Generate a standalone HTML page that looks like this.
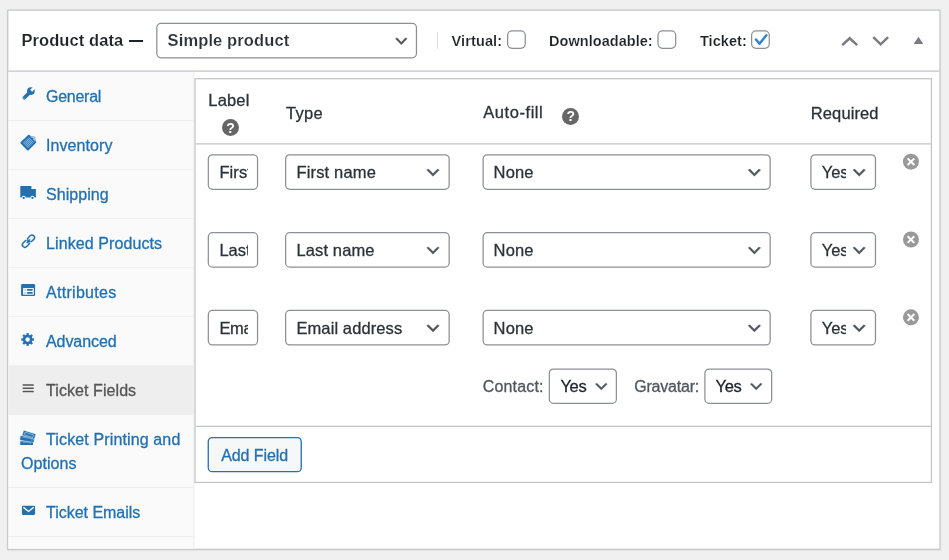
<!DOCTYPE html>
<html><head><meta charset="utf-8">
<style>
*{box-sizing:border-box;margin:0;padding:0}
html,body{width:949px;height:560px;overflow:hidden;background:#f0f0f1;font-family:"Liberation Sans",sans-serif;color:#3c434a}
.a{position:absolute}
.t{position:absolute;white-space:nowrap;line-height:24px;height:24px;will-change:opacity;opacity:.999}
.box{position:absolute;border:1px solid #8c8f94;border-radius:4px;background:#fff}
.clip{position:absolute;overflow:hidden}
svg{overflow:visible}
</style></head><body>

<div class="a" style="left:7px;top:10px;width:934px;height:540px;box-shadow:0 1px 1px rgba(0,0,0,.05)"></div>
<svg class="a" style="left:0;top:0" width="949" height="560" viewBox="0 0 949 560"><rect x="7.75" y="10.1" width="932.25" height="539.2" fill="#fff" stroke="#c3c4c7" stroke-width="1.25"/><rect x="8.37" y="71.6" width="185.2" height="477.1" fill="#fafafa"/><rect x="8.37" y="365" width="184.8" height="50" fill="#eee"/><rect x="8.37" y="120" width="184.8" height="1" fill="#eee"/><rect x="8.37" y="169" width="184.8" height="1" fill="#eee"/><rect x="8.37" y="218" width="184.8" height="1" fill="#eee"/><rect x="8.37" y="267" width="184.8" height="1" fill="#eee"/><rect x="8.37" y="316" width="184.8" height="1" fill="#eee"/><rect x="8.37" y="487" width="184.8" height="1" fill="#eee"/><rect x="8.37" y="536" width="184.8" height="1" fill="#eee"/><path d="M193.8 71.6 V548.7" stroke="#eee" stroke-width="1.25"/><path d="M8.3 71.05 H939.4" stroke="#c3c4c7" stroke-width="1.25"/><rect x="195" y="78.7" width="736.4" height="403.7" fill="#fff" stroke="#c3c4c7" stroke-width="1.25"/><path d="M195.6 143.9 H930.8 M195.6 426.4 H930.8" stroke="#c3c4c7" stroke-width="1.25"/></svg>
<svg class="a" style="left:0;top:0" width="949" height="560"><rect x="156.82" y="23.48" width="259.65" height="34.30" rx="4.2" fill="#fff" stroke="#8c8f94" stroke-width="1.25"/></svg>
<svg class="a" style="left:0;top:0" width="949" height="560"><polygon points="397.10,37.78 401.30,42.18 405.50,37.78 407.18,38.66 401.30,44.82 395.42,38.66" fill="#50575e" stroke="#50575e" stroke-width="0.35" stroke-linejoin="round"/></svg>
<div class="a" style="left:437px;top:32px;width:1px;height:17px;background:#dcdcde"></div>
<svg class="a" style="left:0;top:0" width="949" height="560"><rect x="507.62" y="30.82" width="17.65" height="17.45" rx="4.4" fill="#fff" stroke="#8c8f94" stroke-width="1.25"/></svg>
<svg class="a" style="left:0;top:0" width="949" height="560"><rect x="658.02" y="30.82" width="17.65" height="17.45" rx="4.4" fill="#fff" stroke="#8c8f94" stroke-width="1.25"/></svg>
<svg class="a" style="left:0;top:0" width="949" height="560"><rect x="751.62" y="30.82" width="17.65" height="17.45" rx="4.4" fill="#fff" stroke="#8c8f94" stroke-width="1.25"/></svg>
<svg class="a" style="left:0;top:0" width="949" height="560"><path d="M756 39.5 L759.5 43.7 L766.3 35.3" fill="none" stroke="#3582c4" stroke-width="2.5" stroke-linecap="round" stroke-linejoin="round"/></svg>
<svg class="a" style="left:0;top:0" width="949" height="560"><path d="M842.2 45.1 L849.7 38.3 L857.2 45.1" fill="none" stroke="#787c82" stroke-width="2.5"/><path d="M873.3 37.2 L880.7 44.3 L888.1 37.2" fill="none" stroke="#787c82" stroke-width="2.5"/><path d="M913.7 44 L918.5 36.8 L923.3 44Z" fill="#787c82"/></svg>
<div class="a" style="left:222.0px;top:119.2px;width:17px;height:17px;border-radius:50%;background:#666"></div>
<div class="t" style="left:222.0px;top:115.7px;width:17px;text-align:center;font-size:14px;font-weight:bold;color:#fff">?</div>
<div class="a" style="left:562.3px;top:107.7px;width:17px;height:17px;border-radius:50%;background:#666"></div>
<div class="t" style="left:562.3px;top:104.2px;width:17px;text-align:center;font-size:14px;font-weight:bold;color:#fff">?</div>
<svg class="a" style="left:0;top:0" width="949" height="560"><rect x="208.32" y="154.82" width="49.25" height="34.45" rx="4.2" fill="#fff" stroke="#8c8f94" stroke-width="1.25"/></svg>
<div class="clip" style="left:219px;top:157px;width:29px;height:31px"><div class="t" style="letter-spacing:0.1px;left:0.4px;top:3px;font-size:16.5px;color:#2c3338;-webkit-text-stroke:0.3px #2c3338">First Name</div></div>
<svg class="a" style="left:0;top:0" width="949" height="560"><rect x="285.62" y="154.82" width="163.55" height="34.45" rx="4.2" fill="#fff" stroke="#8c8f94" stroke-width="1.25"/></svg>
<svg class="a" style="left:0;top:0" width="949" height="560"><polygon points="428.50,169.10 433.00,173.60 437.50,169.10 439.30,170.00 433.00,176.30 426.70,170.00" fill="#50575e" stroke="#50575e" stroke-width="0.35" stroke-linejoin="round"/></svg>
<svg class="a" style="left:0;top:0" width="949" height="560"><rect x="483.12" y="154.82" width="287.05" height="34.45" rx="4.2" fill="#fff" stroke="#8c8f94" stroke-width="1.25"/></svg>
<svg class="a" style="left:0;top:0" width="949" height="560"><polygon points="749.90,169.10 754.40,173.60 758.90,169.10 760.70,170.00 754.40,176.30 748.10,170.00" fill="#50575e" stroke="#50575e" stroke-width="0.35" stroke-linejoin="round"/></svg>
<svg class="a" style="left:0;top:0" width="949" height="560"><rect x="810.92" y="154.82" width="64.55" height="34.45" rx="4.2" fill="#fff" stroke="#8c8f94" stroke-width="1.25"/></svg>
<div class="clip" style="left:821px;top:157px;width:25.2px;height:31px"><div class="t" style="left:0.7px;top:3px;font-size:16.5px;color:#2c3338;-webkit-text-stroke:0.3px #2c3338">Yes</div></div>
<svg class="a" style="left:0;top:0" width="949" height="560"><polygon points="854.70,169.10 859.20,173.60 863.70,169.10 865.50,170.00 859.20,176.30 852.90,170.00" fill="#50575e" stroke="#50575e" stroke-width="0.35" stroke-linejoin="round"/></svg>
<svg class="a" style="left:0;top:0" width="949" height="560"><circle cx="910.95" cy="161.7" r="8" fill="#999"/><path d="M907.6 158.35 L914.3 165.05 M914.3 158.35 L907.6 165.05" stroke="#fff" stroke-width="2" fill="none"/></svg>
<svg class="a" style="left:0;top:0" width="949" height="560"><rect x="208.32" y="232.65" width="49.25" height="34.45" rx="4.2" fill="#fff" stroke="#8c8f94" stroke-width="1.25"/></svg>
<div class="clip" style="left:219px;top:235px;width:29px;height:31px"><div class="t" style="letter-spacing:0px;left:0.4px;top:3px;font-size:16.5px;color:#2c3338;-webkit-text-stroke:0.3px #2c3338">Last Name</div></div>
<svg class="a" style="left:0;top:0" width="949" height="560"><rect x="285.62" y="232.65" width="163.55" height="34.45" rx="4.2" fill="#fff" stroke="#8c8f94" stroke-width="1.25"/></svg>
<svg class="a" style="left:0;top:0" width="949" height="560"><polygon points="428.50,246.93 433.00,251.43 437.50,246.93 439.30,247.83 433.00,254.13 426.70,247.83" fill="#50575e" stroke="#50575e" stroke-width="0.35" stroke-linejoin="round"/></svg>
<svg class="a" style="left:0;top:0" width="949" height="560"><rect x="483.12" y="232.65" width="287.05" height="34.45" rx="4.2" fill="#fff" stroke="#8c8f94" stroke-width="1.25"/></svg>
<svg class="a" style="left:0;top:0" width="949" height="560"><polygon points="749.90,246.93 754.40,251.43 758.90,246.93 760.70,247.83 754.40,254.13 748.10,247.83" fill="#50575e" stroke="#50575e" stroke-width="0.35" stroke-linejoin="round"/></svg>
<svg class="a" style="left:0;top:0" width="949" height="560"><rect x="810.92" y="232.65" width="64.55" height="34.45" rx="4.2" fill="#fff" stroke="#8c8f94" stroke-width="1.25"/></svg>
<div class="clip" style="left:821px;top:235px;width:25.2px;height:31px"><div class="t" style="left:0.7px;top:3px;font-size:16.5px;color:#2c3338;-webkit-text-stroke:0.3px #2c3338">Yes</div></div>
<svg class="a" style="left:0;top:0" width="949" height="560"><polygon points="854.70,246.93 859.20,251.43 863.70,246.93 865.50,247.83 859.20,254.13 852.90,247.83" fill="#50575e" stroke="#50575e" stroke-width="0.35" stroke-linejoin="round"/></svg>
<svg class="a" style="left:0;top:0" width="949" height="560"><circle cx="910.95" cy="239.52999999999997" r="8" fill="#999"/><path d="M907.6 236.18 L914.3 242.88 M914.3 236.18 L907.6 242.88" stroke="#fff" stroke-width="2" fill="none"/></svg>
<svg class="a" style="left:0;top:0" width="949" height="560"><rect x="208.32" y="310.49" width="49.25" height="34.45" rx="4.2" fill="#fff" stroke="#8c8f94" stroke-width="1.25"/></svg>
<div class="clip" style="left:219px;top:313px;width:29px;height:31px"><div class="t" style="letter-spacing:-0.3px;left:0.4px;top:3px;font-size:16.5px;color:#2c3338;-webkit-text-stroke:0.3px #2c3338">Email</div></div>
<svg class="a" style="left:0;top:0" width="949" height="560"><rect x="285.62" y="310.49" width="163.55" height="34.45" rx="4.2" fill="#fff" stroke="#8c8f94" stroke-width="1.25"/></svg>
<svg class="a" style="left:0;top:0" width="949" height="560"><polygon points="428.50,324.76 433.00,329.26 437.50,324.76 439.30,325.66 433.00,331.96 426.70,325.66" fill="#50575e" stroke="#50575e" stroke-width="0.35" stroke-linejoin="round"/></svg>
<svg class="a" style="left:0;top:0" width="949" height="560"><rect x="483.12" y="310.49" width="287.05" height="34.45" rx="4.2" fill="#fff" stroke="#8c8f94" stroke-width="1.25"/></svg>
<svg class="a" style="left:0;top:0" width="949" height="560"><polygon points="749.90,324.76 754.40,329.26 758.90,324.76 760.70,325.66 754.40,331.96 748.10,325.66" fill="#50575e" stroke="#50575e" stroke-width="0.35" stroke-linejoin="round"/></svg>
<svg class="a" style="left:0;top:0" width="949" height="560"><rect x="810.92" y="310.49" width="64.55" height="34.45" rx="4.2" fill="#fff" stroke="#8c8f94" stroke-width="1.25"/></svg>
<div class="clip" style="left:821px;top:313px;width:25.2px;height:31px"><div class="t" style="left:0.7px;top:3px;font-size:16.5px;color:#2c3338;-webkit-text-stroke:0.3px #2c3338">Yes</div></div>
<svg class="a" style="left:0;top:0" width="949" height="560"><polygon points="854.70,324.76 859.20,329.26 863.70,324.76 865.50,325.66 859.20,331.96 852.90,325.66" fill="#50575e" stroke="#50575e" stroke-width="0.35" stroke-linejoin="round"/></svg>
<svg class="a" style="left:0;top:0" width="949" height="560"><circle cx="910.95" cy="317.36" r="8" fill="#999"/><path d="M907.6 314.01 L914.3 320.71 M914.3 314.01 L907.6 320.71" stroke="#fff" stroke-width="2" fill="none"/></svg>
<svg class="a" style="left:0;top:0" width="949" height="560"><rect x="549.33" y="369.02" width="67.05" height="34.35" rx="4.2" fill="#fff" stroke="#8c8f94" stroke-width="1.25"/></svg>
<svg class="a" style="left:0;top:0" width="949" height="560"><polygon points="597.00,383.16 601.30,387.46 605.60,383.16 607.32,384.02 601.30,390.04 595.28,384.02" fill="#50575e" stroke="#50575e" stroke-width="0.35" stroke-linejoin="round"/></svg>
<svg class="a" style="left:0;top:0" width="949" height="560"><rect x="704.92" y="369.02" width="66.75" height="34.35" rx="4.2" fill="#fff" stroke="#8c8f94" stroke-width="1.25"/></svg>
<svg class="a" style="left:0;top:0" width="949" height="560"><polygon points="751.90,383.16 756.20,387.46 760.50,383.16 762.22,384.02 756.20,390.04 750.18,384.02" fill="#50575e" stroke="#50575e" stroke-width="0.35" stroke-linejoin="round"/></svg>
<svg class="a" style="left:0;top:0" width="949" height="560"><rect x="208.25" y="437.55" width="93.00" height="34.10" rx="4" fill="#f6f7f7" stroke="#2271b1" stroke-width="1.3"/></svg>
<div class="t" id="t0" style="left:21.4px;top:28px;font-size:16.5px;font-weight:bold;color:#1d2327;letter-spacing:0.086px;-webkit-text-stroke:0.15px #fff">Product data</div>
<div class="t" id="t0d" style="left:129px;top:29px;font-size:14.1px;font-weight:bold;color:#1d2327;letter-spacing:0.000px;transform-origin:0 12.2px;transform:translateY(-2.4px) scaleY(1.45)">—</div>
<div class="t" id="t1" style="left:167.6px;top:28px;font-size:16.5px;font-weight:bold;color:#2c3338;letter-spacing:0.116px;-webkit-text-stroke:0.15px #fff">Simple product</div>
<div class="t" id="t2" style="left:451.6px;top:29px;font-size:14.5px;font-weight:bold;color:#1d2327;letter-spacing:0.114px;-webkit-text-stroke:0.15px #fff">Virtual:</div>
<div class="t" id="t3" style="left:549.1px;top:29px;font-size:14.5px;font-weight:bold;color:#1d2327;letter-spacing:0.040px;-webkit-text-stroke:0.15px #fff">Downloadable:</div>
<div class="t" id="t4" style="left:699.9px;top:29px;font-size:14.5px;font-weight:bold;color:#1d2327;letter-spacing:0.069px;-webkit-text-stroke:0.15px #fff">Ticket:</div>
<div class="t" id="a0" style="left:46px;top:85px;font-size:16px;font-weight:normal;color:#2271b1;letter-spacing:-0.254px;-webkit-text-stroke:0.3px #2271b1">General</div>
<div class="t" id="a1" style="left:46px;top:134px;font-size:16px;font-weight:normal;color:#2271b1;letter-spacing:0.073px;-webkit-text-stroke:0.3px #2271b1">Inventory</div>
<div class="t" id="a2" style="left:46px;top:183px;font-size:16px;font-weight:normal;color:#2271b1;letter-spacing:0.046px;-webkit-text-stroke:0.3px #2271b1">Shipping</div>
<div class="t" id="a3" style="left:46px;top:232px;font-size:16px;font-weight:normal;color:#2271b1;letter-spacing:0.098px;-webkit-text-stroke:0.3px #2271b1">Linked Products</div>
<div class="t" id="a4" style="left:46px;top:281px;font-size:16px;font-weight:normal;color:#2271b1;letter-spacing:0.290px;-webkit-text-stroke:0.3px #2271b1">Attributes</div>
<div class="t" id="a5" style="left:46px;top:330px;font-size:16px;font-weight:normal;color:#2271b1;letter-spacing:-0.082px;-webkit-text-stroke:0.3px #2271b1">Advanced</div>
<div class="t" id="a6" style="left:46px;top:379px;font-size:16px;font-weight:normal;color:#555;letter-spacing:0.075px;-webkit-text-stroke:0.3px #555">Ticket Fields</div>
<div class="t" id="a7" style="left:46px;top:428px;font-size:16px;font-weight:normal;color:#2271b1;letter-spacing:0.132px;-webkit-text-stroke:0.3px #2271b1">Ticket Printing and</div>
<div class="t" id="a8" style="left:21px;top:452px;font-size:16px;font-weight:normal;color:#2271b1;letter-spacing:0.043px;-webkit-text-stroke:0.3px #2271b1">Options</div>
<div class="t" id="a9" style="left:46px;top:501px;font-size:16px;font-weight:normal;color:#2271b1;letter-spacing:-0.019px;-webkit-text-stroke:0.3px #2271b1">Ticket Emails</div>
<div class="t" id="h0" style="left:208.3px;top:88px;font-size:16.5px;font-weight:normal;color:#2c3338;letter-spacing:0.156px;-webkit-text-stroke:0.3px #2c3338">Label</div>
<div class="t" id="h1" style="left:286px;top:101px;font-size:16.5px;font-weight:normal;color:#2c3338;letter-spacing:0.306px;-webkit-text-stroke:0.3px #2c3338">Type</div>
<div class="t" id="h2" style="left:483.2px;top:100px;font-size:16.5px;font-weight:normal;color:#2c3338;letter-spacing:0.571px;-webkit-text-stroke:0.3px #2c3338">Auto-fill</div>
<div class="t" id="h3" style="left:810.8px;top:101px;font-size:16.5px;font-weight:normal;color:#2c3338;letter-spacing:0.104px;-webkit-text-stroke:0.3px #2c3338">Required</div>
<div class="t" id="c0" style="left:482.8px;top:375px;font-size:16px;font-weight:normal;color:#50575e;letter-spacing:0.158px;-webkit-text-stroke:0.3px #50575e">Contact:</div>
<div class="t" id="c1" style="left:634.2px;top:375px;font-size:16px;font-weight:normal;color:#50575e;letter-spacing:-0.198px;-webkit-text-stroke:0.3px #50575e">Gravatar:</div>
<div class="t" id="b0" style="left:221.2px;top:444px;font-size:16px;font-weight:normal;color:#2271b1;letter-spacing:-0.087px;-webkit-text-stroke:0.3px #2271b1">Add Field</div>
<div class="t" id="r0t" style="left:296.4px;top:160px;font-size:16.5px;font-weight:normal;color:#2c3338;letter-spacing:0.174px;-webkit-text-stroke:0.3px #2c3338">First name</div>
<div class="t" id="r0n" style="left:493.6px;top:160px;font-size:16.5px;font-weight:normal;color:#2c3338;letter-spacing:0.116px;-webkit-text-stroke:0.3px #2c3338">None</div>
<div class="t" id="r1t" style="left:296.4px;top:238px;font-size:16.5px;font-weight:normal;color:#2c3338;letter-spacing:0.132px;-webkit-text-stroke:0.3px #2c3338">Last name</div>
<div class="t" id="r1n" style="left:493.6px;top:238px;font-size:16.5px;font-weight:normal;color:#2c3338;letter-spacing:0.116px;-webkit-text-stroke:0.3px #2c3338">None</div>
<div class="t" id="r2t" style="left:296.4px;top:316px;font-size:16.5px;font-weight:normal;color:#2c3338;letter-spacing:0.104px;-webkit-text-stroke:0.3px #2c3338">Email address</div>
<div class="t" id="r2n" style="left:493.6px;top:316px;font-size:16.5px;font-weight:normal;color:#2c3338;letter-spacing:0.116px;-webkit-text-stroke:0.3px #2c3338">None</div>
<div class="t" id="y0" style="left:560.4px;top:374px;font-size:16.5px;font-weight:normal;color:#1d2327;letter-spacing:-0.311px;-webkit-text-stroke:0.3px #1d2327">Yes</div>
<div class="t" id="y1" style="left:715.5px;top:374px;font-size:16.5px;font-weight:normal;color:#1d2327;letter-spacing:-0.311px;-webkit-text-stroke:0.3px #1d2327">Yes</div>
<svg class="a" style="left:0;top:0" width="949" height="560" viewBox="0 0 949 560">
<g><path d="M24.3 97.8 L30.2 91.9" stroke="#2271b1" stroke-width="3.5" stroke-linecap="round" fill="none"/><circle cx="30.9" cy="91.1" r="3.85" fill="#2271b1"/><path d="M31.2 90.8 L35.7 86.3" stroke="#fafafa" stroke-width="2.8" fill="none"/><circle cx="24" cy="98.1" r="0.65" fill="#9fc0df"/></g>
<g><clipPath id="dm"><path d="M28.9 135.7 L35.4 142 L27.9 149.6 L21.4 142.8 Z"/></clipPath><path d="M28.9 135.7 L35.4 142 L27.9 149.6 L21.4 142.8 Z" fill="#8fb6dc"/><g clip-path="url(#dm)" stroke="#2271b1" stroke-width="0.55" fill="none"><path d="M19.20 143.30 L29.20 133.30" /><path d="M19.20 141.70 L29.20 151.70" /><path d="M20.25 144.35 L30.25 134.35" /><path d="M20.25 140.65 L30.25 150.65" /><path d="M21.30 145.40 L31.30 135.40" /><path d="M21.30 139.60 L31.30 149.60" /><path d="M22.35 146.45 L32.35 136.45" /><path d="M22.35 138.55 L32.35 148.55" /><path d="M23.40 147.50 L33.40 137.50" /><path d="M23.40 137.50 L33.40 147.50" /><path d="M24.45 148.55 L34.45 138.55" /><path d="M24.45 136.45 L34.45 146.45" /><path d="M25.50 149.60 L35.50 139.60" /><path d="M25.50 135.40 L35.50 145.40" /><path d="M26.55 150.65 L36.55 140.65" /><path d="M26.55 134.35 L36.55 144.35" /><path d="M27.60 151.70 L37.60 141.70" /><path d="M27.60 133.30 L37.60 143.30" /></g><path d="M28.9 135.7 L35.4 142 L27.9 149.6 L21.4 142.8 Z" fill="none" stroke="#2271b1" stroke-width="1.9" stroke-linejoin="round"/><path d="M30.6 136.4 L34.8 137 L35.2 141.4 Z" fill="#c9dcee" stroke="#7fabd6" stroke-width="0.9"/><circle cx="32.7" cy="138.5" r="0.8" fill="#2271b1"/></g>
<g><path d="M20.3 186.1 H31.4 V189.1 H35.9 V197.6 H20.3 Z" fill="#2271b1"/><circle cx="23.7" cy="197.9" r="2.1" fill="#fafafa"/><circle cx="32.5" cy="197.9" r="2.1" fill="#fafafa"/><circle cx="23.7" cy="197.9" r="1.15" fill="#2271b1"/><circle cx="32.5" cy="197.9" r="1.15" fill="#2271b1"/></g>
<g transform="translate(28.45 241.15) rotate(-45) scale(0.93)" fill="none" stroke="#2271b1" stroke-width="1.6"><rect x="-0.3" y="-2.7" width="8.4" height="5.4" rx="2.7"/><rect x="-8.1" y="-2.7" width="8.4" height="5.4" rx="2.7"/><path d="M-2.6 0 H2.6" stroke-width="1.7"/></g>
<g transform="translate(28.45 241.15) rotate(-45) scale(0.93)" stroke="#fafafa" stroke-width="1.1" fill="none"><path d="M-0.3 -3.6 V-1.6"/><path d="M0.3 3.6 V1.6"/></g>
<g><rect x="21.1" y="284" width="14" height="12" rx="1.2" fill="#2271b1"/><rect x="23.1" y="288.1" width="10.7" height="6.6" fill="#fff"/><rect x="27" y="289.1" width="5.8" height="1.6" rx="0.6" fill="#2271b1"/><rect x="27" y="292.1" width="5.8" height="1.6" rx="0.6" fill="#2271b1"/><rect x="23.9" y="289.1" width="2.2" height="1.6" fill="#b9d0e8"/><rect x="23.9" y="292.1" width="2.2" height="1.6" fill="#b9d0e8"/></g>
<g transform="translate(27.66 339.5)" fill="#2271b1"><circle r="4.8"/><rect x="-1.15" y="-6.4" width="2.3" height="3" transform="rotate(0)"/><rect x="-1.15" y="-6.4" width="2.3" height="3" transform="rotate(45)"/><rect x="-1.15" y="-6.4" width="2.3" height="3" transform="rotate(90)"/><rect x="-1.15" y="-6.4" width="2.3" height="3" transform="rotate(135)"/><rect x="-1.15" y="-6.4" width="2.3" height="3" transform="rotate(180)"/><rect x="-1.15" y="-6.4" width="2.3" height="3" transform="rotate(225)"/><rect x="-1.15" y="-6.4" width="2.3" height="3" transform="rotate(270)"/><rect x="-1.15" y="-6.4" width="2.3" height="3" transform="rotate(315)"/><circle r="2.25" fill="#fafafa"/></g>
<rect x="22.6" y="384.35" width="11.2" height="1.5" rx="0.5" fill="#555"/>
<rect x="22.6" y="387.55" width="11.2" height="1.5" rx="0.5" fill="#555"/>
<rect x="22.6" y="390.7" width="11.2" height="1.5" rx="0.5" fill="#555"/>
<g fill="#2271b1"><rect x="20.2" y="441.2" width="12.8" height="3.9" rx="0.3"/><path d="M22.8 442.4 H30.4 V444" fill="none" stroke="#a9c7e4" stroke-width="0.5"/><g transform="rotate(9 27.1 438.9)"><rect x="20" y="436.5" width="14.3" height="4.9" stroke="#fafafa" stroke-width="0.45"/><path d="M22.3 437.8 H32 V440" fill="none" stroke="#a9c7e4" stroke-width="0.5"/></g><g transform="rotate(17 29 434.5)"><rect x="22.6" y="432" width="12.9" height="5.4" stroke="#fafafa" stroke-width="0.45"/><path d="M24.6 433.5 H33.4 V436.2 H24.6Z" fill="none" stroke="#c3d8ee" stroke-width="0.55"/></g></g>
<g><rect x="21.9" y="505.7" width="13.2" height="9.2" rx="1.1" fill="#2271b1"/><path d="M23.4 507.4 L28.5 511.5 L33.6 507.4" fill="none" stroke="#fff" stroke-width="1.35"/></g>
</svg>
</body></html>
